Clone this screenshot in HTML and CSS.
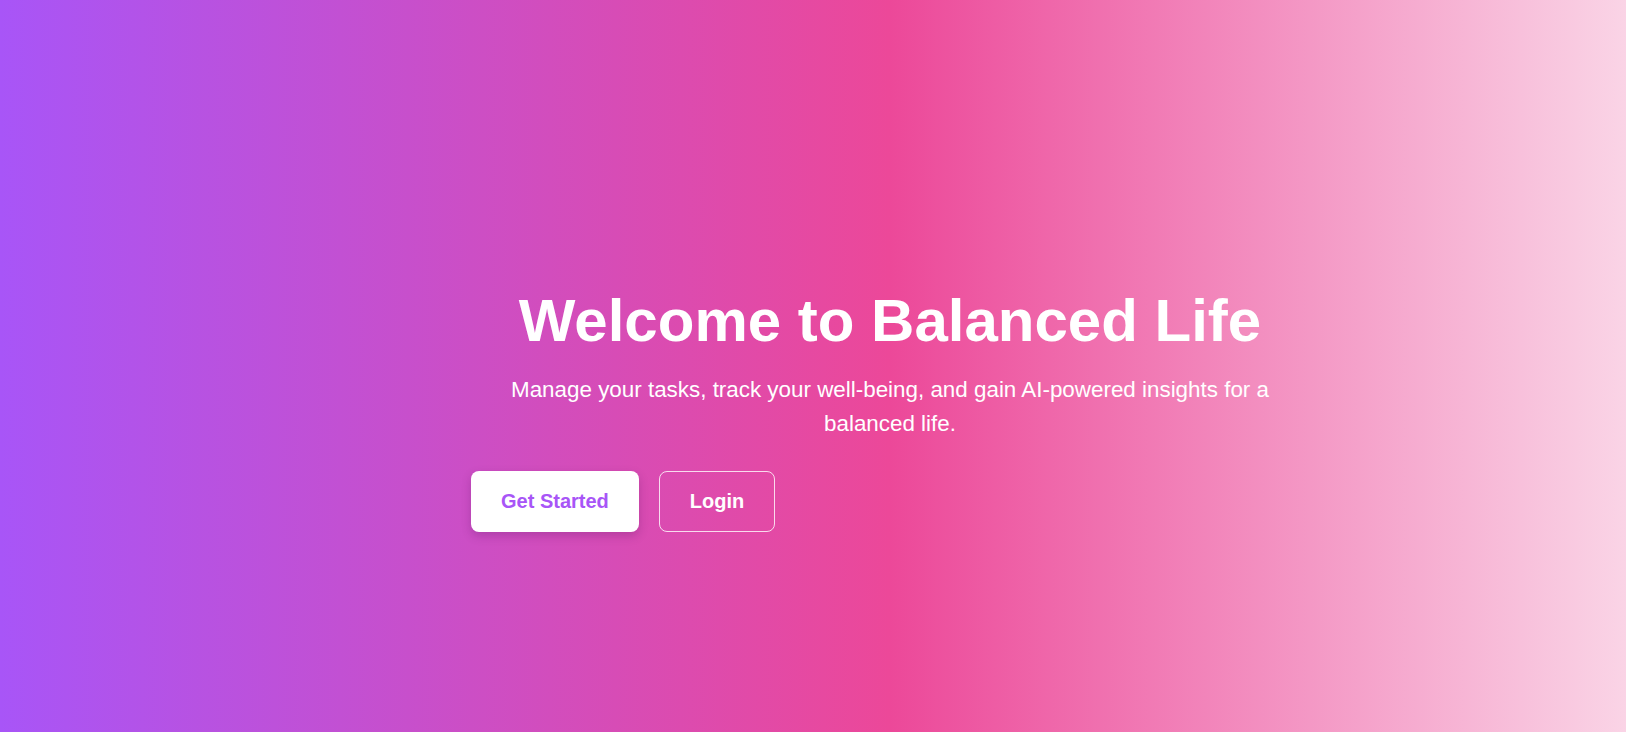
FILE: index.html
```html
<!DOCTYPE html>
<html lang="en">
<head>
<meta charset="utf-8">
<title>Balanced Life</title>
<link rel="stylesheet" href="styles.css">
</head>
<body>
<main class="hero">
  <div class="hero-content">
    <h1 class="hero-title">Welcome to Balanced Life</h1>
    <p class="hero-text">Manage your tasks, track your well-being, and gain AI-powered insights for a balanced life.</p>
    <div class="hero-actions">
      <a class="btn btn-primary" href="#">Get Started</a>
      <a class="btn btn-outline" href="#">Login</a>
    </div>
  </div>
</main>
</body>
</html>
```

FILE: styles.css
```css
* { box-sizing: border-box; }
html, body { margin: 0; padding: 0; }
body {
  font-family: "Liberation Sans", Arial, sans-serif;
  color: #fff;
}
.hero {
  min-height: 732px;
  background: linear-gradient(to right, #a855f7 0%, #ec4899 54.7%, #fad4e6 100%);
  padding: 291px 0 0 154px;
  display: flex;
  flex-direction: column;
  align-items: center;
}
.hero-content {
  width: 838px;
  display: flex;
  flex-direction: column;
}
.hero-title {
  margin: 0;
  font-size: 60px;
  line-height: 60px;
  font-weight: 700;
  text-align: center;
}
.hero-text {
  margin: 22px auto 0;
  max-width: 800px;
  font-size: 22.4px;
  line-height: 33.6px;
  text-align: center;
}
.hero-actions {
  margin-top: 31px;
  display: flex;
  gap: 20px;
}
.btn {
  display: inline-flex;
  align-items: center;
  justify-content: center;
  height: 61px;
  border-radius: 8px;
  font-size: 20px;
  font-weight: 700;
  text-decoration: none;
}
.btn-primary {
  padding: 0 30px;
  background: #fff;
  color: #a855f7;
  box-shadow: 0 4px 10px rgba(80, 20, 90, 0.25);
}
.btn-outline {
  padding: 0 30px;
  color: #fff;
  border: 1px solid rgba(255, 255, 255, 0.8);
}
```
